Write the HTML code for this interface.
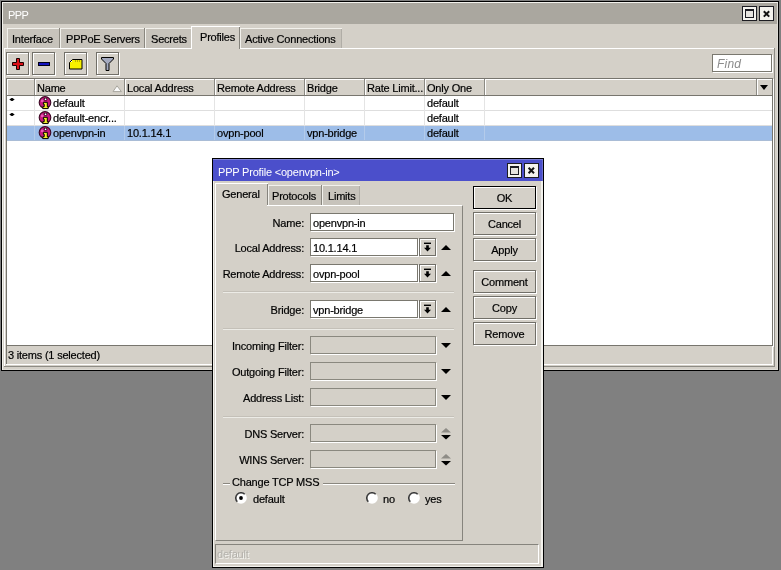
<!DOCTYPE html>
<html><head><meta charset="utf-8">
<style>
*{box-sizing:border-box;margin:0;padding:0}
html,body{width:781px;height:570px;overflow:hidden;background:#808080}
body{position:relative;font-family:"Liberation Sans",sans-serif;font-size:11px;color:#000;letter-spacing:-0.2px}
.a{position:absolute}
.t{position:absolute;white-space:nowrap;line-height:13px;will-change:transform;-webkit-text-stroke:0.2px currentColor}
.r{text-align:right}
.face{background:#d4d0c8}
.btn{position:absolute;background:#d4d0c8;border:1px solid #716f68;box-shadow:inset 1px 1px 0 #fff,1px 1px 0 #fff}
.hd{position:absolute;top:79px;height:16px;border-right:1px solid #8c8a83;box-shadow:inset 1px 1px 0 #fff}
.vl{position:absolute;width:1px;background:#e4e4e4}
.hl{position:absolute;height:1px;background:#dedede}
.inp{position:absolute;background:#fff;border:1px solid #7a786f;box-shadow:1px 1px 0 #fff}
.dis{position:absolute;background:#d4d0c8;border:1px solid #8a887f;box-shadow:1px 1px 0 #fff}
.tri-u{position:absolute;width:0;height:0;border-left:5px solid transparent;border-right:5px solid transparent;border-bottom:5px solid #000}
.tri-d{position:absolute;width:0;height:0;border-left:5px solid transparent;border-right:5px solid transparent;border-top:5px solid #000}
.wb{position:absolute;width:15px;height:15px;background:#f4f3ee;border:1px solid #1c1c22}
</style></head><body>
<svg width="0" height="0" style="position:absolute">
<defs>
<symbol id="pico" viewBox="0 0 14 14">
<circle cx="7" cy="6.4" r="5.8" fill="#c8187e" stroke="#3a0822" stroke-width="1.1"/>
<circle cx="4.3" cy="4.9" r="1.4" fill="#ee5cbc"/>
<rect x="5.7" y="2" width="3.6" height="2.6" rx="1" fill="#1a0010"/>
<rect x="6.6" y="2.6" width="1.9" height="1.3" rx=".6" fill="#fff"/>
<path d="M5.4 6.3h3.9v4.4h.9v1.9h-5.4v-1.9h1.4v-2.5h-.8z" fill="#f6ee2a" stroke="#000" stroke-width="1"/>
</symbol>
<symbol id="ddb" viewBox="0 0 17 18">
<rect x="5" y="4.6" width="7" height="1.4" fill="#000"/>
<path d="M7.2 7.2h2.6v2.6h2.2l-3.5 3.6l-3.5-3.6h2.2z" fill="#000"/>
</symbol>
</defs></svg>

<div class="a" style="left:1px;top:1px;width:778px;height:370px;background:#000"></div>
<div class="a" style="left:2px;top:2px;width:776px;height:368px;background:#dedcd6;box-shadow:inset 1px 1px 0 #f2f1ec"></div>
<div class="a face" style="left:3px;top:3px;width:774px;height:366px"></div>
<div class="a" style="left:3px;top:3px;width:774px;height:21px;background:#aaa79f"></div>
<div class="t" style="left:8px;top:9px;color:#fff;letter-spacing:-0.6px;-webkit-text-stroke:0">PPP</div>
<div class="wb" style="left:742px;top:6px"></div>
<div class="a" style="left:745px;top:9px;width:9px;height:9px;border:1px solid #1c1c22;border-top-width:2px;background:#e6e4df"></div>
<div class="wb" style="left:759px;top:6px"></div>
<svg class="a" style="left:759px;top:6px" width="15" height="15"><path d="M4.8 5.2 L10.2 10.6 M10.2 5.2 L4.8 10.6" stroke="#141414" stroke-width="2"/></svg>
<div class="a" style="left:7px;top:28px;width:52px;height:20px;background:#c7c3bb;box-shadow:inset 1px 1px 0 #f2f1ec"></div>
<div class="t" style="left:12px;top:33px">Interface</div>
<div class="a" style="left:59px;top:28px;width:1px;height:20px;background:#8a877f"></div>
<div class="a" style="left:60px;top:28px;width:84px;height:20px;background:#c7c3bb;box-shadow:inset 1px 1px 0 #f2f1ec"></div>
<div class="t" style="left:66px;top:33px">PPPoE Servers</div>
<div class="a" style="left:144px;top:28px;width:1px;height:20px;background:#8a877f"></div>
<div class="a" style="left:145px;top:28px;width:46px;height:20px;background:#c7c3bb;box-shadow:inset 1px 1px 0 #f2f1ec"></div>
<div class="t" style="left:151px;top:33px">Secrets</div>
<div class="a" style="left:191px;top:26px;width:49px;height:23px;background:#d4d0c8;box-shadow:inset 1px 1px 0 #fff,inset -1px 0 0 #86847d"></div>
<div class="t" style="left:200px;top:31px">Profiles</div>
<div class="a" style="left:240px;top:28px;width:102px;height:20px;background:#c7c3bb;box-shadow:inset 1px 1px 0 #f2f1ec,inset -1px 0 0 #b0ada6"></div>
<div class="t" style="left:245px;top:33px">Active Connections</div>
<div class="a" style="left:4px;top:48px;width:187px;height:1px;background:#fff"></div>
<div class="a" style="left:240px;top:48px;width:535px;height:1px;background:#fff"></div>
<div class="a" style="left:4px;top:48px;width:1px;height:318px;background:#fff"></div>
<div class="a" style="left:774px;top:48px;width:1px;height:319px;background:#8e8c85"></div>
<div class="a" style="left:4px;top:366px;width:771px;height:1px;background:#8e8c85"></div>
<div class="btn" style="left:6px;top:52px;width:23px;height:23px"></div>
<svg class="a" style="left:6px;top:52px" width="23" height="23"><path d="M10.5 6.5h3v4h4v3h-4v4h-3v-4h-4v-3h4z" fill="#dc1018" stroke="#1a0000" stroke-width="1"/></svg>
<div class="btn" style="left:32px;top:52px;width:23px;height:23px"></div>
<svg class="a" style="left:32px;top:52px" width="23" height="23"><rect x="6.5" y="10.5" width="11" height="3" fill="#1414c0" stroke="#000018"/></svg>
<div class="btn" style="left:64px;top:52px;width:23px;height:23px"></div>
<svg class="a" style="left:64px;top:52px" width="23" height="23"><path d="M8.5 7.5h9.5v9.5h-12.5v-6.5z" fill="#f6f000" stroke="#000"/><path d="M11 9h1M13 9h1M15 9h1" stroke="#807000"/><rect x="7" y="9" width="1" height="1" fill="#fff"/></svg>
<div class="btn" style="left:96px;top:52px;width:23px;height:23px"></div>
<svg class="a" style="left:96px;top:52px" width="23" height="23"><path d="M5.5 5.5h12v1.5l-4.5 4.5v7h-3v-7l-4.5-4.5z" fill="#a4aac0" stroke="#000" stroke-linejoin="round"/></svg>
<div class="inp" style="left:712px;top:54px;width:60px;height:18px"></div>
<div class="t" style="left:717px;top:58px;color:#8c8c8c;font-style:italic;font-size:12px;letter-spacing:0.2px;-webkit-text-stroke:0">Find</div>
<div class="a" style="left:6px;top:78px;width:767px;height:268px;background:#fff;border:1px solid #77756e;box-shadow:1px 1px 0 #fff"></div>
<div class="a face" style="left:7px;top:79px;width:765px;height:16px"></div>
<div class="a" style="left:7px;top:95px;width:765px;height:1px;background:#77756e"></div>
<div class="hd" style="left:7px;width:28px"></div>
<div class="hd" style="left:35px;width:90px"></div>
<div class="t" style="left:37px;top:82px">Name</div>
<div class="hd" style="left:125px;width:90px"></div>
<div class="t" style="left:127px;top:82px">Local Address</div>
<div class="hd" style="left:215px;width:90px"></div>
<div class="t" style="left:217px;top:82px">Remote Address</div>
<div class="hd" style="left:305px;width:60px"></div>
<div class="t" style="left:307px;top:82px">Bridge</div>
<div class="hd" style="left:365px;width:60px"></div>
<div class="t" style="left:367px;top:82px">Rate Limit...</div>
<div class="hd" style="left:425px;width:60px"></div>
<div class="t" style="left:427px;top:82px">Only One</div>
<div class="hd" style="left:485px;width:272px"></div>
<div class="hd" style="left:757px;width:15px;border-right:none"></div>
<div class="tri-d" style="left:760px;top:85px;border-left-width:4.5px;border-right-width:4.5px"></div>
<svg class="a" style="left:112px;top:85px" width="11" height="8"><path d="M5 .8L1 6.6h8.4z" fill="#fbfbfb" stroke="#a8a69e" stroke-width="1"/></svg>
<div class="hl" style="left:7px;top:110px;width:765px"></div>
<div class="hl" style="left:7px;top:125px;width:765px"></div>
<div class="a" style="left:7px;top:126px;width:765px;height:14px;background:#9dbde8"></div>
<div class="hl" style="left:7px;top:140px;width:765px;background:#a9bcd6"></div>
<div class="vl" style="left:34px;top:96px;height:30px"></div>
<div class="vl" style="left:34px;top:126px;height:14px;background:#b4cbea"></div>
<div class="vl" style="left:124px;top:96px;height:30px"></div>
<div class="vl" style="left:124px;top:126px;height:14px;background:#b4cbea"></div>
<div class="vl" style="left:214px;top:96px;height:30px"></div>
<div class="vl" style="left:214px;top:126px;height:14px;background:#b4cbea"></div>
<div class="vl" style="left:304px;top:96px;height:30px"></div>
<div class="vl" style="left:304px;top:126px;height:14px;background:#b4cbea"></div>
<div class="vl" style="left:364px;top:96px;height:30px"></div>
<div class="vl" style="left:364px;top:126px;height:14px;background:#b4cbea"></div>
<div class="vl" style="left:424px;top:96px;height:30px"></div>
<div class="vl" style="left:424px;top:126px;height:14px;background:#b4cbea"></div>
<div class="vl" style="left:484px;top:96px;height:30px"></div>
<div class="vl" style="left:484px;top:126px;height:14px;background:#b4cbea"></div>
<svg class="a" style="left:9px;top:97px" width="6" height="5"><path d="M0.3 2.6L2.5 1h1l2.2 1.6L3.5 4h-1z" fill="#000"/></svg>
<svg class="a" style="left:9px;top:112px" width="6" height="5"><path d="M0.3 2.6L2.5 1h1l2.2 1.6L3.5 4h-1z" fill="#000"/></svg>
<svg class="a" style="left:38px;top:96px" width="14" height="14"><use href="#pico"/></svg>
<svg class="a" style="left:38px;top:111px" width="14" height="14"><use href="#pico"/></svg>
<svg class="a" style="left:38px;top:126px" width="14" height="14"><use href="#pico"/></svg>
<div class="t" style="left:53px;top:97px">default</div>
<div class="t" style="left:427px;top:97px">default</div>
<div class="t" style="left:53px;top:112px">default-encr...</div>
<div class="t" style="left:427px;top:112px">default</div>
<div class="t" style="left:53px;top:127px">openvpn-in</div>
<div class="t" style="left:127px;top:127px">10.1.14.1</div>
<div class="t" style="left:217px;top:127px">ovpn-pool</div>
<div class="t" style="left:307px;top:127px">vpn-bridge</div>
<div class="t" style="left:427px;top:127px">default</div>
<div class="a" style="left:6px;top:346px;width:767px;height:19px;background:#d4d0c8;box-shadow:inset -1px -1px 0 #fff,inset 1px 0 0 #77756e"></div>
<div class="t" style="left:8px;top:349px">3 items (1 selected)</div>
<div class="a" style="left:212px;top:158px;width:332px;height:410px;background:#000"></div>
<div class="a" style="left:213px;top:159px;width:330px;height:408px;background:#f2f1ec"></div>
<div class="a face" style="left:214px;top:160px;width:327px;height:406px"></div>
<div class="a" style="left:213px;top:159px;width:330px;height:22px;background:#4b4fcb;box-shadow:inset 0 1px 0 #7d80d6,inset -1px 0 0 #6d70d2"></div>
<div class="t" style="left:218px;top:166px;color:#fff;-webkit-text-stroke:0">PPP Profile &lt;openvpn-in&gt;</div>
<div class="wb" style="left:507px;top:163px"></div>
<div class="a" style="left:510px;top:166px;width:9px;height:9px;border:1px solid #1c1c22;border-top-width:2px;background:#e6e4df"></div>
<div class="wb" style="left:524px;top:163px"></div>
<svg class="a" style="left:524px;top:163px" width="15" height="15"><path d="M4.6 4.8 L10 10.2 M10 4.8 L4.6 10.2" stroke="#141414" stroke-width="2"/></svg>
<div class="a" style="left:215px;top:183px;width:53px;height:23px;background:#d4d0c8;box-shadow:inset 1px 1px 0 #fff,inset -1px 0 0 #86847d"></div>
<div class="t" style="left:222px;top:188px">General</div>
<div class="a" style="left:268px;top:185px;width:54px;height:20px;background:#c7c3bb;box-shadow:inset 1px 1px 0 #f2f1ec"></div>
<div class="t" style="left:272px;top:190px">Protocols</div>
<div class="a" style="left:321px;top:185px;width:1px;height:20px;background:#8a877f"></div>
<div class="a" style="left:322px;top:185px;width:38px;height:20px;background:#c7c3bb;box-shadow:inset 1px 1px 0 #f2f1ec,inset -1px 0 0 #b0ada6"></div>
<div class="t" style="left:328px;top:190px">Limits</div>
<div class="a" style="left:215px;top:205px;width:248px;height:336px;border-left:1px solid #fff;border-top:1px solid #fff;border-right:1px solid #86847d;border-bottom:1px solid #86847d"></div>
<div class="a face" style="left:216px;top:205px;width:51px;height:2px"></div>
<div class="t r" style="left:154px;top:217px;width:150px">Name:</div>
<div class="inp" style="left:310px;top:213px;width:144px;height:18px"></div>
<div class="t" style="left:313px;top:217px">openvpn-in</div>
<div class="t r" style="left:154px;top:242px;width:150px">Local Address:</div>
<div class="inp" style="left:310px;top:238px;width:108px;height:18px"></div>
<div class="t" style="left:313px;top:242px">10.1.14.1</div>
<div class="btn" style="left:419px;top:238px;width:17px;height:18px"></div>
<svg class="a" style="left:419px;top:238px" width="17" height="18"><use href="#ddb"/></svg>
<div class="tri-u" style="left:441px;top:245px"></div>
<div class="t r" style="left:154px;top:268px;width:150px">Remote Address:</div>
<div class="inp" style="left:310px;top:264px;width:108px;height:18px"></div>
<div class="t" style="left:313px;top:268px">ovpn-pool</div>
<div class="btn" style="left:419px;top:264px;width:17px;height:18px"></div>
<svg class="a" style="left:419px;top:264px" width="17" height="18"><use href="#ddb"/></svg>
<div class="tri-u" style="left:441px;top:271px"></div>
<div class="t r" style="left:154px;top:304px;width:150px">Bridge:</div>
<div class="inp" style="left:310px;top:300px;width:108px;height:18px"></div>
<div class="t" style="left:313px;top:304px">vpn-bridge</div>
<div class="btn" style="left:419px;top:300px;width:17px;height:18px"></div>
<svg class="a" style="left:419px;top:300px" width="17" height="18"><use href="#ddb"/></svg>
<div class="tri-u" style="left:441px;top:307px"></div>
<div class="a" style="left:223px;top:291px;width:231px;height:1px;background:#c4c0b8"></div>
<div class="a" style="left:223px;top:292px;width:231px;height:1px;background:#ecebe6"></div>
<div class="a" style="left:223px;top:328px;width:231px;height:1px;background:#c4c0b8"></div>
<div class="a" style="left:223px;top:329px;width:231px;height:1px;background:#ecebe6"></div>
<div class="t r" style="left:154px;top:340px;width:150px">Incoming Filter:</div>
<div class="dis" style="left:310px;top:336px;width:126px;height:18px"></div>
<div class="tri-d" style="left:441px;top:343px"></div>
<div class="t r" style="left:154px;top:366px;width:150px">Outgoing Filter:</div>
<div class="dis" style="left:310px;top:362px;width:126px;height:18px"></div>
<div class="tri-d" style="left:441px;top:369px"></div>
<div class="t r" style="left:154px;top:392px;width:150px">Address List:</div>
<div class="dis" style="left:310px;top:388px;width:126px;height:18px"></div>
<div class="tri-d" style="left:441px;top:395px"></div>
<div class="a" style="left:223px;top:416px;width:231px;height:1px;background:#c4c0b8"></div>
<div class="a" style="left:223px;top:417px;width:231px;height:1px;background:#ecebe6"></div>
<div class="t r" style="left:154px;top:428px;width:150px">DNS Server:</div>
<div class="dis" style="left:310px;top:424px;width:126px;height:18px"></div>
<svg class="a" style="left:440px;top:427px" width="12" height="14"><path d="M1 5.5h10L6 1z" fill="#8e8c86"/><path d="M1 8h10L6 12.5z" fill="#000"/></svg>
<div class="t r" style="left:154px;top:454px;width:150px">WINS Server:</div>
<div class="dis" style="left:310px;top:450px;width:126px;height:18px"></div>
<svg class="a" style="left:440px;top:453px" width="12" height="14"><path d="M1 5.5h10L6 1z" fill="#8e8c86"/><path d="M1 8h10L6 12.5z" fill="#000"/></svg>
<div class="a" style="left:223px;top:483px;width:7px;height:1px;background:#8a877f"></div>
<div class="a" style="left:223px;top:484px;width:7px;height:1px;background:#fff"></div>
<div class="t" style="left:232px;top:476px">Change TCP MSS</div>
<div class="a" style="left:323px;top:483px;width:132px;height:1px;background:#8a877f"></div>
<div class="a" style="left:323px;top:484px;width:132px;height:1px;background:#fff"></div>
<svg class="a" style="left:235px;top:492px" width="12" height="12"><circle cx="6" cy="6" r="5.8" fill="#fff"/><path d="M2.3 9.7A5.2 5.2 0 0 1 9.7 2.3" fill="none" stroke="#3a3a3a" stroke-width="1.6"/><circle cx="6" cy="6" r="1.9" fill="#000"/></svg>
<div class="t" style="left:253px;top:493px">default</div>
<svg class="a" style="left:366px;top:492px" width="12" height="12"><circle cx="6" cy="6" r="5.8" fill="#fff"/><path d="M2.3 9.7A5.2 5.2 0 0 1 9.7 2.3" fill="none" stroke="#3a3a3a" stroke-width="1.6"/></svg>
<div class="t" style="left:383px;top:493px">no</div>
<svg class="a" style="left:408px;top:492px" width="12" height="12"><circle cx="6" cy="6" r="5.8" fill="#fff"/><path d="M2.3 9.7A5.2 5.2 0 0 1 9.7 2.3" fill="none" stroke="#3a3a3a" stroke-width="1.6"/></svg>
<div class="t" style="left:425px;top:493px">yes</div>
<div class="a" style="left:473px;top:186px;width:63px;height:23px;background:#d4d0c8;border:1px solid #000;box-shadow:inset 1px 1px 0 #fff,1px 1px 0 #fff"></div>
<div class="t" style="left:473px;top:192px;width:63px;text-align:center">OK</div>
<div class="btn" style="left:473px;top:212px;width:63px;height:23px"></div>
<div class="t" style="left:473px;top:218px;width:63px;text-align:center">Cancel</div>
<div class="btn" style="left:473px;top:238px;width:63px;height:23px"></div>
<div class="t" style="left:473px;top:244px;width:63px;text-align:center">Apply</div>
<div class="btn" style="left:473px;top:270px;width:63px;height:23px"></div>
<div class="t" style="left:473px;top:276px;width:63px;text-align:center">Comment</div>
<div class="btn" style="left:473px;top:296px;width:63px;height:23px"></div>
<div class="t" style="left:473px;top:302px;width:63px;text-align:center">Copy</div>
<div class="btn" style="left:473px;top:322px;width:63px;height:23px"></div>
<div class="t" style="left:473px;top:328px;width:63px;text-align:center">Remove</div>
<div class="a" style="left:215px;top:544px;width:324px;height:20px;border-top:1px solid #86847d;border-left:1px solid #86847d;border-right:1px solid #fff;border-bottom:1px solid #fff"></div>
<div class="t" style="left:217px;top:548px;color:#b4b2ac;text-shadow:1px 1px 0 #f4f3ef;-webkit-text-stroke:0">default</div>
</body></html>
